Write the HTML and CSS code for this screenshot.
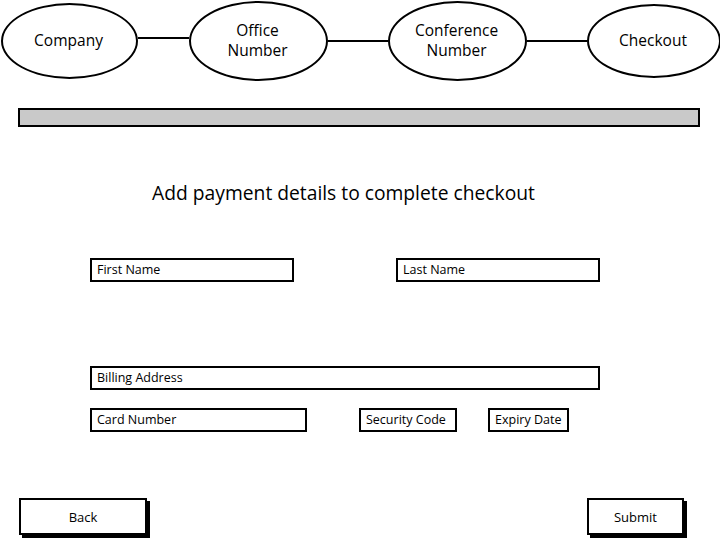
FILE: index.html
```html
<!DOCTYPE html>
<html>
<head>
<meta charset="utf-8">
<link rel="stylesheet" href="styles.css">
</head>
<body>
<div class="page">
  <div class="diagram">
    <div class="node n1">Company</div>
    <div class="link l1"></div>
    <div class="node n2">Office<br>Number</div>
    <div class="link l2"></div>
    <div class="node n3">Conference<br>Number</div>
    <div class="link l3"></div>
    <div class="node n4">Checkout</div>
  </div>
  <div class="progress"></div>
  <h1 class="title">Add payment details to complete checkout</h1>
  <div class="form">
    <div class="row row1">
      <div class="field w-first">First Name</div>
      <div class="field w-last">Last Name</div>
    </div>
    <div class="row row2">
      <div class="field w-bill">Billing Address</div>
    </div>
    <div class="row row3">
      <div class="field w-card">Card Number</div>
      <div class="field w-sec">Security Code</div>
      <div class="field w-exp">Expiry Date</div>
    </div>
  </div>
  <div class="footer">
    <div class="btn back">Back</div>
    <div class="btn submit">Submit</div>
  </div>
</div>
</body>
</html>
```
FILE: styles.css
```css
* { box-sizing: border-box; }
html, body { margin: 0; padding: 0; background: #fff; }
body {
  font-family: "Open Sans", "Noto Sans", sans-serif;
  color: #000;
  width: 720px;
  height: 540px;
  overflow: hidden;
}
.page { width: 720px; height: 540px; }

.diagram {
  display: flex;
  align-items: center;
  height: 82px;
  padding-left: 1px;
}
.node {
  border: 2px solid #000;
  border-radius: 50%;
  display: flex;
  align-items: center;
  justify-content: center;
  text-align: center;
  font-size: 15.5px;
  line-height: 20px;
  padding-bottom: 3px;
  padding-right: 2px;
  background: #fff;
  flex: none;
}
.n1 { width: 137px; height: 76px; }
.n2 { width: 139px; height: 80px; }
.n3 { width: 139px; height: 80px; }
.n4 { width: 134px; height: 74px; }
.link { height: 2px; background: #000; flex: none; }
.l1 { width: 51px; margin-bottom: 7px; }
.l2 { width: 60px; }
.l3 { width: 60px; }

.progress {
  margin: 26px 20px 0 18px;
  height: 19px;
  background: #c9c9c9;
  border: 2px solid #000;
}

.title {
  margin: 54px 0 0 0;
  font-weight: normal;
  font-size: 19.25px;
  line-height: 24px;
  text-align: center;
  padding-right: 33px;
}

.form { padding-left: 90px; }
.row { display: flex; }
.row1 { margin-top: 53px; gap: 102px; }
.row2 { margin-top: 84px; }
.row3 { margin-top: 18px; }
.field {
  height: 24px;
  border: 2px solid #000;
  font-size: 12.5px;
  line-height: 20px;
  padding-left: 5px;
  white-space: nowrap;
  flex: none;
}
.w-first, .w-last { width: 204px; }
.w-bill { width: 510px; }
.w-card { width: 217px; }
.w-sec { width: 98px; margin-left: 52px; }
.w-exp { width: 81px; margin-left: 31px; }

.footer {
  display: flex;
  margin-top: 66px;
  padding-left: 19px;
}
.btn {
  height: 37px;
  border: 2px solid #000;
  box-shadow: 3px 3px 0 #000;
  display: flex;
  align-items: center;
  justify-content: center;
  font-size: 13px;
  background: #fff;
  flex: none;
}
.back { width: 128px; }
.submit { width: 97px; margin-left: 440px; }
```
